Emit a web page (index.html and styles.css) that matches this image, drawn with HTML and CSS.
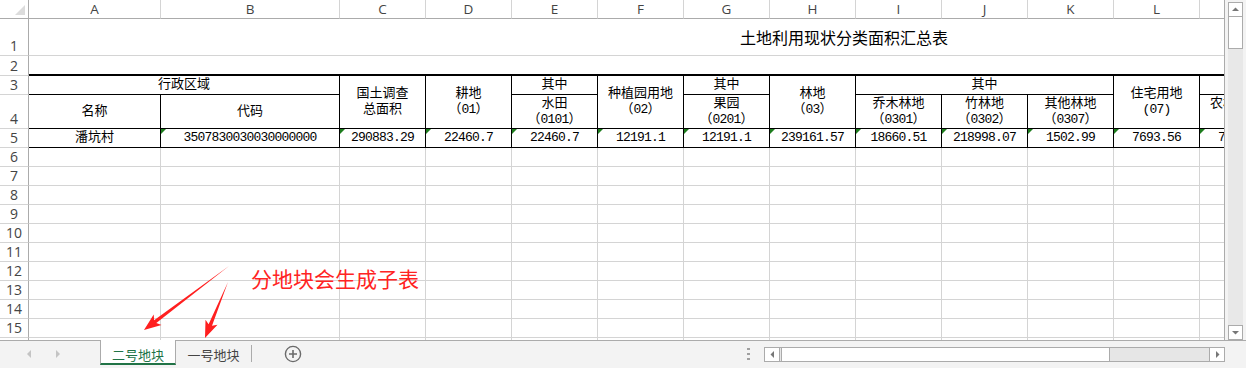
FILE: index.html
```html
<!DOCTYPE html>
<html lang="zh-CN">
<head>
  <meta charset="UTF-8">
  <meta name="viewport" content="width=device-width, initial-scale=1.0">
  <title>土地利用现状分类面积汇总表</title>
  <link rel="stylesheet" href="styles.css">
</head>
<body>
  <div class="window">
    <div class="main">
      <div class="sheet">
        <div class="grid" id="sheet">
          <!-- column headers -->
          <div class="corner"></div>
          <div class="ch">A</div>
          <div class="ch">B</div>
          <div class="ch">C</div>
          <div class="ch">D</div>
          <div class="ch">E</div>
          <div class="ch">F</div>
          <div class="ch">G</div>
          <div class="ch">H</div>
          <div class="ch">I</div>
          <div class="ch">J</div>
          <div class="ch">K</div>
          <div class="ch">L</div>
          <div class="ch">M</div>

          <!-- row 1: title -->
          <div class="rh">1</div>
          <div class="title">土地利用现状分类面积汇总表</div>

          <!-- row 2 -->
          <div class="rh">2</div>
          <div class="gap"></div>

          <!-- row 3 -->
          <div class="rh">3</div>
          <div class="hd span2c">行政区域</div>
          <div class="hd span2r"><span>国土调查</span><span>总面积</span></div>
          <div class="hd span2r"><span>耕地</span><span class="num"><i class="po">（</i>01<i class="pc">）</i></span></div>
          <div class="hd">其中</div>
          <div class="hd span2r"><span>种植园用地</span><span class="num"><i class="po">（</i>02<i class="pc">）</i></span></div>
          <div class="hd">其中</div>
          <div class="hd span2r"><span>林地</span><span class="num"><i class="po">（</i>03<i class="pc">）</i></span></div>
          <div class="hd span3c">其中</div>
          <div class="hd span2r"><span>住宅用地</span><span class="num">(07)</span></div>
          <div class="hd"></div>

          <!-- row 4 -->
          <div class="rh">4</div>
          <div class="hd">名称</div>
          <div class="hd">代码</div>
          <div class="hd"><span>水田</span><span class="num"><i class="po">（</i>0101<i class="pc">）</i></span></div>
          <div class="hd"><span>果园</span><span class="num"><i class="po">（</i>0201<i class="pc">）</i></span></div>
          <div class="hd"><span>乔木林地</span><span class="num"><i class="po">（</i>0301<i class="pc">）</i></span></div>
          <div class="hd"><span>竹林地</span><span class="num"><i class="po">（</i>0302<i class="pc">）</i></span></div>
          <div class="hd"><span>其他林地</span><span class="num"><i class="po">（</i>0307<i class="pc">）</i></span></div>
          <div class="hd"><span>农村宅基地</span><span class="num"><i class="po">（</i>0702<i class="pc">）</i></span></div>

          <!-- row 5: data -->
          <div class="rh">5</div>
          <div class="val">潘坑村</div>
          <div class="val num txt">3507830030030000000</div>
          <div class="val num txt">290883.29</div>
          <div class="val num txt">22460.7</div>
          <div class="val num txt">22460.7</div>
          <div class="val num txt">12191.1</div>
          <div class="val num txt">12191.1</div>
          <div class="val num txt">239161.57</div>
          <div class="val num txt">18660.51</div>
          <div class="val num txt">218998.07</div>
          <div class="val num txt">1502.99</div>
          <div class="val num txt">7693.56</div>
          <div class="val num txt">7693.56</div>
        </div>
      </div>

      <div class="vscroll">
        <div class="vbtn">
          <svg width="13" height="13" viewBox="0 0 13 13"><polygon points="3,8 10,8 6.5,4.5" fill="#777"/></svg>
        </div>
        <div class="vthumb"></div>
        <div class="vtrack"></div>
        <div class="vbtn">
          <svg width="13" height="13" viewBox="0 0 13 13"><polygon points="3,5 10,5 6.5,8.5" fill="#777"/></svg>
        </div>
      </div>
    </div>

    <div class="tabbar">
      <div class="nav">
        <svg width="100" height="27" viewBox="0 0 100 27">
          <polygon points="31,9 27,13 31,17" fill="#c4c4c4"/>
          <polygon points="56,9 60,13 56,17" fill="#c4c4c4"/>
        </svg>
      </div>
      <div class="tab active">二号地块</div>
      <div class="tab">一号地块</div>
      <div class="sep"></div>
      <div class="add">
        <svg width="18" height="18" viewBox="0 0 18 18">
          <circle cx="9" cy="9" r="7.6" fill="none" stroke="#6a6a6a" stroke-width="1.4"/>
          <path d="M9 5v8M5 9h8" stroke="#6a6a6a" stroke-width="1.6"/>
        </svg>
      </div>
      <div class="hbar">
        <svg class="dots" width="3" height="12" viewBox="0 0 3 12">
          <rect x="0" y="0" width="3" height="2" fill="#a0a0a0"/>
          <rect x="0" y="5" width="3" height="2" fill="#a0a0a0"/>
          <rect x="0" y="10" width="3" height="2" fill="#a0a0a0"/>
        </svg>
        <div class="hscroll">
          <div class="hbtn left">
            <svg width="13" height="13" viewBox="0 0 13 13"><polygon points="8,3 8,10 4.5,6.5" fill="#777"/></svg>
          </div>
          <div class="hthumb"></div>
          <div class="htrack"></div>
          <div class="hbtn right">
            <svg width="13" height="13" viewBox="0 0 13 13"><polygon points="5,3 5,10 8.5,6.5" fill="#777"/></svg>
          </div>
        </div>
      </div>
    </div>

    <!-- annotation -->
    <svg class="arrows" width="1246" height="368" viewBox="0 0 1246 368">
      <polygon points="229,266 156.3,323 161.5,325 144,330 153.7,314.6 154.1,320.2" fill="#ff1f1f"/>
      <polygon points="228,282 212,325.7 217.5,324.8 205,338 205.5,319.8 208.6,324.3" fill="#ff1f1f"/>
    </svg>
    <div class="note">分地块会生成子表</div>
  </div>

  <script>
    // blank rows below the data
    const sheet = document.getElementById("sheet");
    for (let r = 6; r <= 16; r++) {
      const head = document.createElement("div");
      head.className = "rh";
      head.textContent = r;
      sheet.appendChild(head);
      for (let c = 0; c < 13; c++) {
        sheet.appendChild(document.createElement("div"));
      }
    }
  </script>
</body>
</html>
```

FILE: styles.css
```css
body {
  margin: 0;
  width: 1246px;
  height: 368px;
  overflow: hidden;
  background: #fff;
  font-family: "Noto Sans CJK SC", sans-serif;
}
.window {
  position: relative;
  display: flex;
  flex-direction: column;
  height: 368px;
}
.main {
  display: flex;
  height: 340px;
}
.sheet {
  width: 1225px;
  height: 340px;
  box-sizing: border-box;
  border-right: 1px solid #ababab;
  overflow: hidden;
}

/* cell grid */
.grid {
  display: grid;
  grid-template-columns: 29px 132px 179px repeat(11, 86px);
  grid-template-rows: 19px 37px 20px 19px 34px 19px;
  grid-auto-rows: 19px;
  font-family: "Liberation Mono", "Noto Sans CJK SC", monospace;
  font-size: 13px;
  color: #000;
}
.grid > * {
  box-sizing: border-box;
  border-right: 1px solid #d4d4d4;
  border-bottom: 1px solid #d4d4d4;
  min-width: 0;
  white-space: nowrap;
}
.corner {
  position: relative;
  border-right-color: #ababab !important;
  border-bottom-color: #ababab !important;
}
.corner::after {
  content: "";
  position: absolute;
  right: 3px;
  bottom: 3px;
  border-left: 10px solid transparent;
  border-bottom: 10px solid #dcdcdc;
}
.ch {
  display: flex;
  align-items: center;
  justify-content: center;
  border-bottom-color: #ababab !important;
  font-family: "Open Sans", sans-serif;
  font-size: 13.5px;
  color: #444;
}
.rh {
  display: flex;
  align-items: flex-end;
  justify-content: center;
  line-height: 18px;
  border-right-color: #ababab !important;
  font-family: "Open Sans", sans-serif;
  font-size: 14px;
  color: #444;
}
.title {
  grid-column: span 13;
  display: flex;
  align-items: center;
  padding-left: 711px;
  border-right: none !important;
  font-family: "Noto Sans CJK SC", sans-serif;
  font-size: 16px;
}
.gap {
  grid-column: span 13;
  border-right: none !important;
  border-bottom: 2px solid #000 !important;
}
.hd {
  display: flex;
  flex-direction: column;
  align-items: center;
  justify-content: center;
  line-height: 16px;
  border-right-color: #000 !important;
  border-bottom-color: #000 !important;
}
.span2c {
  grid-column: span 2;
}
.span3c {
  grid-column: span 3;
}
.span2r {
  grid-row: span 2;
}
.val {
  position: relative;
  display: flex;
  align-items: center;
  justify-content: center;
  line-height: 16px;
  padding-bottom: 1px;
  border-right-color: #000 !important;
  border-bottom-color: #000 !important;
}
.num {
  letter-spacing: -0.8px;
}
/* full-width brackets, one em each */
.po,
.pc {
  display: inline-block;
  width: 13px;
  font-style: normal;
  letter-spacing: 0;
}
.po {
  text-align: right;
}
.pc {
  text-align: left;
}
.txt::before {
  content: "";
  position: absolute;
  top: 0;
  left: 0;
  border-top: 5px solid #1d7d1d;
  border-right: 5px solid transparent;
}

/* vertical scrollbar */
.vscroll {
  display: flex;
  flex-direction: column;
  width: 21px;
  height: 340px;
  box-sizing: border-box;
  padding: 2px 3px 0;
  background: #f3f3f3;
}
.vbtn {
  display: flex;
  align-items: center;
  justify-content: center;
  height: 15px;
  box-sizing: border-box;
  border: 1px solid #ababab;
  background: #fff;
}
.vthumb {
  height: 32px;
  box-sizing: border-box;
  border: 1px solid #ababab;
  border-top: none;
  background: #fff;
}
.vtrack {
  flex: 1;
  background: #e8e8e8;
}

/* sheet tabs */
.tabbar {
  display: flex;
  align-items: flex-start;
  height: 28px;
  box-sizing: border-box;
  border-top: 1px solid #ababab;
  background: #f3f3f3;
  font-size: 13px;
}
.nav {
  width: 100px;
  height: 27px;
}
.nav svg {
  display: block;
}
.tab {
  width: 75px;
  height: 24px;
  box-sizing: border-box;
  padding-top: 4px;
  line-height: 19px;
  text-align: center;
  color: #444;
}
.tab.active {
  width: 76px;
  height: 25px;
  margin-top: -1px;
  padding-top: 5px;
  border-left: 1px solid #ababab;
  border-right: 1px solid #ababab;
  border-bottom: 2px solid #217346;
  background: #fff;
  color: #217346;
}
.sep {
  width: 1px;
  height: 17px;
  margin-top: 4px;
  background: #ababab;
}
.add {
  margin: 4px 0 0 32px;
  height: 18px;
}
.add svg {
  display: block;
}
.hbar {
  display: flex;
  align-items: flex-start;
  margin-left: auto;
  margin-right: 21px;
}
.dots {
  display: block;
  margin-top: 7px;
}
.hscroll {
  display: flex;
  width: 461px;
  height: 15px;
  margin: 6px 0 0 14px;
  box-sizing: border-box;
  border: 1px solid #ababab;
  background: #e6e6e6;
}
.hbtn {
  display: flex;
  align-items: center;
  justify-content: center;
  width: 14px;
  background: #fff;
}
.hbtn.left {
  border-right: 1px solid #ababab;
}
.hbtn.right {
  border-left: 1px solid #ababab;
}
.hthumb {
  width: 329px;
  margin-left: 1px;
  box-sizing: border-box;
  border-left: 1px solid #ababab;
  border-right: 1px solid #ababab;
  background: #fff;
}
.htrack {
  flex: 1;
}

/* annotation */
.arrows {
  position: absolute;
  top: 0;
  left: 0;
  pointer-events: none;
}
.note {
  position: absolute;
  left: 251px;
  top: 263px;
  line-height: 30px;
  font-size: 21px;
  color: #ff2323;
  white-space: nowrap;
}
```
